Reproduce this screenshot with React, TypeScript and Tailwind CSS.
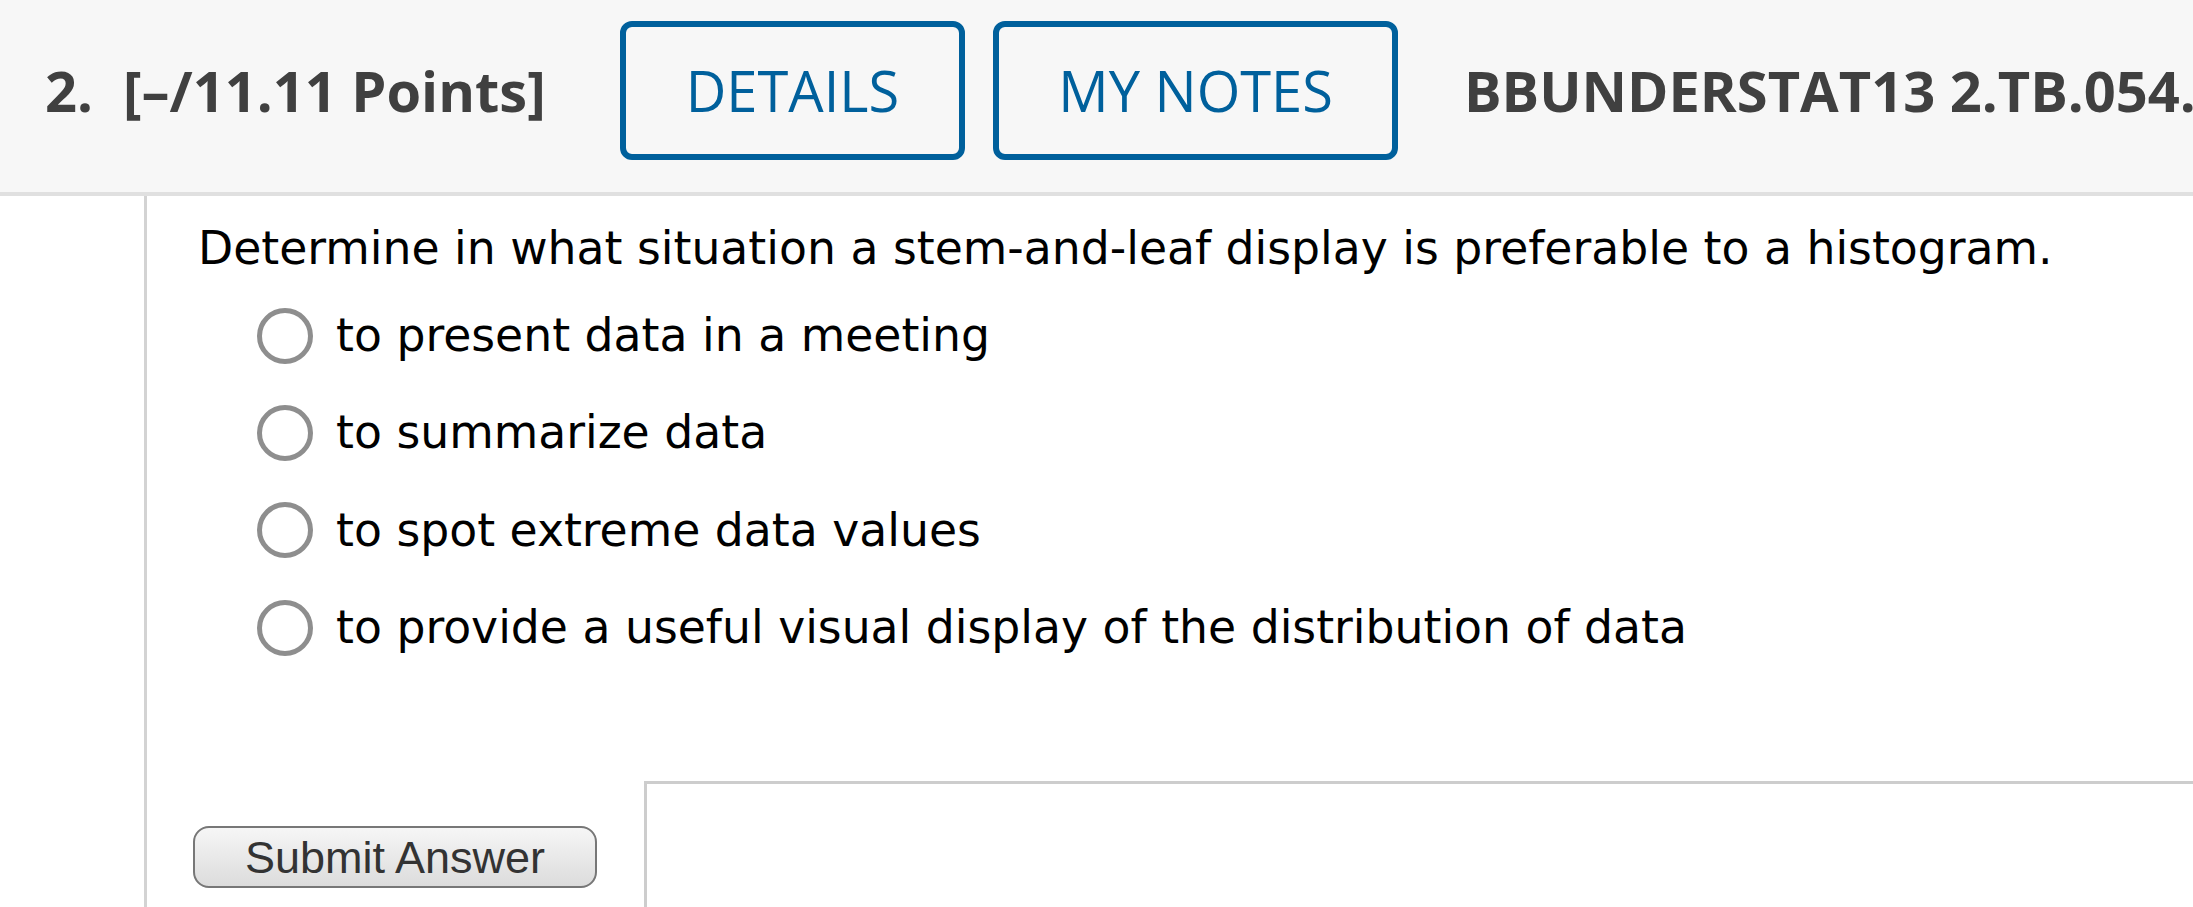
import React from "react";

const options = [
  "to present data in a meeting",
  "to summarize data",
  "to spot extreme data values",
  "to provide a useful visual display of the distribution of data",
];

export default function App() {
  return (
    <div className="w-[2193px] h-[907px] overflow-hidden bg-white flex flex-col">
      <header className="h-[196px] shrink-0 bg-[#f7f7f7] border-b-4 border-[#e0e0e0] flex items-start pt-[21px] pl-[45px] whitespace-nowrap overflow-hidden font-['Open_Sans',sans-serif] text-[56px]">
        <span className="font-bold text-[#404040] leading-[139px]">2.</span>
        <span className="ml-[30px] font-bold text-[#404040] leading-[139px]">[–/11.11 Points]</span>
        <button className="ml-[74px] h-[139px] px-[60px] border-[6px] border-[#00609c] rounded-[12px] text-[#00609c] leading-[127px] font-normal shrink-0">
          DETAILS
        </button>
        <button className="ml-[28px] h-[139px] px-[59px] border-[6px] border-[#00609c] rounded-[12px] text-[#00609c] leading-[127px] font-normal shrink-0">
          MY NOTES
        </button>
        <span className="ml-[66px] font-bold text-[#404040] leading-[139px] shrink-0">BBUNDERSTAT13 2.TB.054.</span>
      </header>
      <div className="flex-1 flex min-h-0">
        <div className="w-[144px] shrink-0" />
        <div className="flex-1 border-l-[3px] border-[#d3d3d3] flex flex-col min-h-0">
          <p className="pt-[26px] pl-[51px] font-['DejaVu_Sans',Verdana,sans-serif] text-[45.7px] leading-[53px] text-black whitespace-nowrap">
            Determine in what situation a stem-and-leaf display is preferable to a histogram.
          </p>
          <div className="mt-[12px] flex flex-col">
            {options.map((o) => (
              <label key={o} className="h-[97.3px] flex items-center pl-[110px]">
                <span className="w-[56px] h-[56px] rounded-full border-[5px] border-[#8e8e8e] bg-white shrink-0" />
                <span className="ml-[23px] font-['DejaVu_Sans',Verdana,sans-serif] text-[45.7px] leading-[53px] text-black whitespace-nowrap">
                  {o}
                </span>
              </label>
            ))}
          </div>
          <div className="mt-[105px] flex flex-1 min-h-0">
            <div className="w-[497px] shrink-0 pt-[45px] pl-[46px]">
              <button className="w-[404px] h-[62px] rounded-[16px] border-2 border-[#777777] bg-gradient-to-b from-[#f6f6f6] to-[#dcdcdc] flex items-center justify-center font-['Liberation_Sans',Arial,sans-serif] text-[45px] leading-none text-[#333333]">
                Submit Answer
              </button>
            </div>
            <div className="flex-1 border-t-[3px] border-l-[3px] border-[#cdcdcd]" />
          </div>
        </div>
      </div>
    </div>
  );
}
